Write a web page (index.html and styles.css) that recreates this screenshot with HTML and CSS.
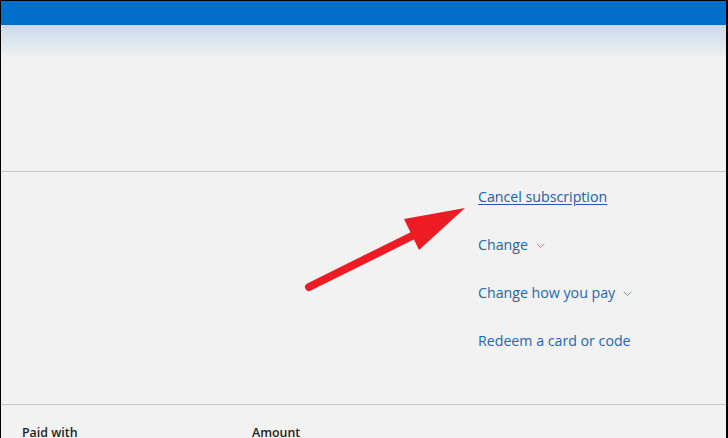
FILE: index.html
```html
<!DOCTYPE html>
<html>
<head>
<meta charset="utf-8">
<link rel="stylesheet" href="styles.css">
</head>
<body>
<div class="frame">
  <div class="topbar"></div>
  <div class="fade"></div>
  <div class="upper"></div>
  <div class="actions">
    <a class="link underline" href="#">Cancel subscription</a>
    <a class="link" href="#">Change <svg class="chev chev-red" width="9" height="6" viewBox="0 0 9 6"><path d="M0.8 0.8 L4.5 4.5 L8.2 0.8" fill="none" stroke="currentColor" stroke-width="1"/></svg></a>
    <a class="link" href="#">Change how you pay <svg class="chev" width="9" height="6" viewBox="0 0 9 6"><path d="M0.8 0.8 L4.5 4.5 L8.2 0.8" fill="none" stroke="currentColor" stroke-width="1"/></svg></a>
    <a class="link" href="#">Redeem a card or code</a>
  </div>
  <div class="table-head">
    <span class="col col-paid">Paid with</span>
    <span class="col">Amount</span>
  </div>
  <svg class="arrow" width="728" height="438" viewBox="0 0 728 438">
    <line x1="309" y1="287" x2="420" y2="232" stroke="#ed1c24" stroke-width="8" stroke-linecap="round"/>
    <polygon points="465,208 404,219 419,250" fill="#ed1c24"/>
  </svg>
</div>
</body>
</html>
```

FILE: styles.css
```css
html, body {
  margin: 0;
  padding: 0;
  background: #f2f2f2;
}
.frame {
  position: relative;
  width: 728px;
  height: 438px;
  box-sizing: border-box;
  border: 1px solid #000;
  border-right-width: 2px;
  border-bottom: none;
  background: #f2f2f2;
  overflow: hidden;
  font-family: "Open Sans", "Segoe UI", sans-serif;
}
.topbar {
  height: 24px;
  background: #006fc9;
}
.fade {
  height: 34px;
  background: linear-gradient(to bottom, #c9d9ea 0%, #dbe4ee 45%, #eaedf0 80%, #f2f2f2 100%);
}
.upper {
  height: 112px;
  border-bottom: 1px solid #c6c6c6;
}
.actions {
  display: flex;
  flex-direction: column;
  align-items: flex-start;
  gap: 28px;
  padding: 15px 0 53px 477px;
  border-bottom: 1px solid #c6c6c6;
}
.link {
  display: flex;
  align-items: center;
  gap: 8px;
  font-size: 14.2px;
  line-height: 20px;
  color: #1a67b8;
  text-decoration: none;
}
.link.underline {
  text-decoration: underline;
  text-underline-offset: 2px;
  color: #1560b0;
}
.chev {
  color: #7f8ea6;
  margin-top: 1px;
}
.chev-red {
  color: #c0788c;
}
.table-head {
  display: flex;
  padding: 19px 0 0 21px;
}
.col {
  font-size: 12.4px;
  line-height: 18px;
  font-weight: 600;
  color: #1f1f1f;
}
.col-paid {
  width: 230px;
}
.arrow {
  position: absolute;
  left: -1px;
  top: -1px;
  pointer-events: none;
}
```
